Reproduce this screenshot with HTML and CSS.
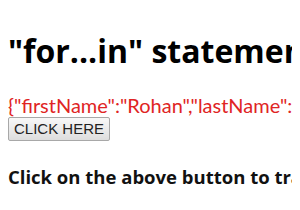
FILE: index.html
```html
<!DOCTYPE html>
<html lang="en">
<head>
    <meta charset="UTF-8">
    <title>for...in statement</title>
    <link rel="stylesheet" href="styles.css">
</head>
<body>
    <h1 class="title">"for...in" statement</h1>
    <p class="result" id="result">{"firstName":"Rohan","lastName":"Sharma","age":22}</p>
    <button class="click-btn">CLICK HERE</button>
    <h3 class="hint">Click on the above button to traverse the object</h3>
</body>
</html>
```

FILE: styles.css
```css
body {
    margin: 8px;
    font-family: "Open Sans", "Liberation Sans", sans-serif;
    background-color: #fff;
    white-space: nowrap;
    overflow: hidden;
}

.title {
    font-size: 32px;
    font-weight: 700;
    color: #000;
    margin: 21px 0;
}

.result {
    font-family: Lato, "Liberation Sans", sans-serif;
    font-size: 20px;
    color: #e02424;
    margin: 0;
}

.click-btn {
    font-family: "Liberation Sans", Arial, sans-serif;
    font-size: 15px;
    padding: 2px 5px 3px;
    border: 1px solid #a8a8a8;
    border-radius: 2px;
    background: linear-gradient(#f8f8f8, #dddddd);
    color: #222;
}

.hint {
    font-size: 18.5px;
    font-weight: 700;
    color: #111;
    margin: 23px 0;
}
```
